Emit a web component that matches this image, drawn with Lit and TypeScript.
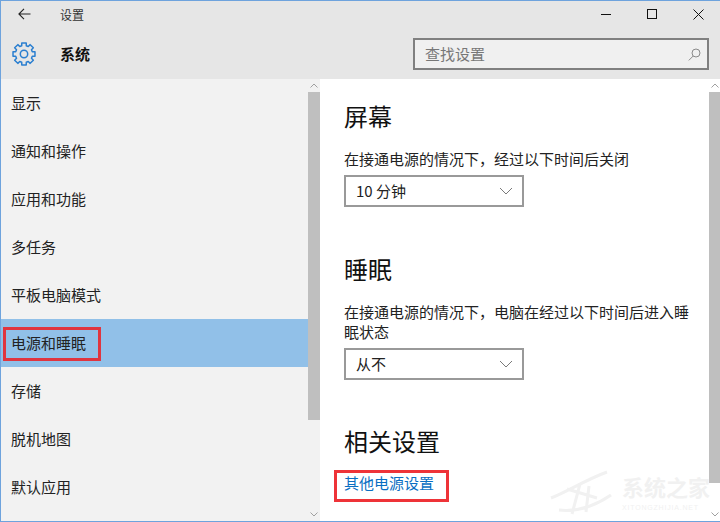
import { LitElement, html, css, svg } from "lit";
import { customElement } from "lit/decorators.js";

const gearPath = (() => {
  const cx = 12, cy = 12, teeth = 8, ro = 11.2, ri = 8.6;
  let d = "";
  for (let i = 0; i < teeth; i++) {
    const a = (i * 2 * Math.PI) / teeth - Math.PI / 2;
    const w = 0.2, g = 0.27;
    const pts = [
      [ri, a - g], [ro, a - w], [ro, a + w], [ri, a + g],
    ];
    pts.forEach(([r, t], j) => {
      const x = (cx + r * Math.cos(t)).toFixed(2);
      const y = (cy + r * Math.sin(t)).toFixed(2);
      d += (i === 0 && j === 0 ? "M" : "L") + x + " " + y + " ";
    });
  }
  return d + "Z";
})();

const chevron = html`<svg class="chev" width="14" height="8" viewBox="0 0 14 8"><path d="M1 1l6 6 6-6" fill="none" stroke="#7a7a7a" stroke-width="1"/></svg>`;

@customElement("app-root")
export class AppRoot extends LitElement {
  static styles = css`
    :host {
      display: block;
      width: 720px;
      height: 522px;
      font-family: "Noto Sans CJK SC", "Liberation Sans", sans-serif;
      color: #1a1a1a;
      overflow: hidden;
    }
    .win {
      position: relative;
      box-sizing: border-box;
      width: 720px;
      height: 522px;
      border: 1px solid #6ea3dd;
      border-right: none;
      display: flex;
      flex-direction: column;
      background: #fff;
    }
    .head {
      height: 78px;
      background: #e6e6e6;
      display: flex;
      flex-direction: column;
      flex: none;
    }
    .titlebar {
      height: 28px;
      display: flex;
      align-items: center;
      font-size: 12px;
      color: #333;
    }
    .titlebar .title { padding-bottom: 2px; }
    .back { width: 59px; display: flex; padding-bottom: 2px; }
    .back svg { margin-left: 17px; }
    .title { flex: 1; }
    .ctl { display: flex; align-items: center; margin-right: -1px; padding-bottom: 2px; }
    .ctl span { width: 46px; display: flex; justify-content: center; }
    .brand {
      display: flex;
      align-items: center;
      font-size: 15px;
      font-weight: 700;
      color: #111;
    }
    .brand svg { margin: 0 24px 0 11px; }
    .brand span { padding-bottom: 2px; }
    .subbar {
      flex: 1;
      display: flex;
      align-items: center;
      justify-content: space-between;
      padding-right: 11px;
    }
    .search {
      box-sizing: border-box;
      width: 296px;
      height: 32px;
      border: 2px solid #808080;
      background: #f0f0f0;
      display: flex;
      align-items: center;
      justify-content: space-between;
      padding: 0 6px 0 10px;
      font-size: 15px;
      color: #777;
    }
    .search span { padding-bottom: 2px; }
    .body { flex: 1; display: flex; min-height: 0; }
    .side {
      width: 307px;
      flex: none;
      background: #f2f2f2;
      display: flex;
      flex-direction: column;
      font-size: 15px;
      color: #222;
    }
    .item {
      position: relative;
      box-sizing: border-box;
      height: 48px;
      flex: none;
      display: flex;
      align-items: center;
      padding: 0 0 2px 10px;
    }
    .item.sel { background: #91c0e8; }
    .mark {
      position: absolute;
      box-sizing: border-box;
      border: 3px solid #e0353f;
      pointer-events: none;
    }
    .mark.m1 { left: 2px; top: 8px; width: 98px; height: 34px; }
    .mark.m2 { left: -10px; top: -2px; width: 115px; height: 32px; border-color: #ee3338; }
    .bar {
      width: 12px;
      flex: none;
      display: flex;
      flex-direction: column;
      background: #f2f2f2;
    }
    .bar.light { background: #fff; width: 11px; }
    .arrow { height: 13px; flex: none; display: flex; align-items: center; justify-content: center; }
    .thumb { background: #bfbfbf; flex: none; }
    .bar.left .thumb { height: 328px; }
    .bar.light .thumb { height: 391px; }
    .rest { flex: 1; }
    .main {
      flex: 1;
      position: relative;
      padding: 0 0 0 24px;
      min-width: 0;
    }
    h2 {
      margin: 0;
      font-size: 24px;
      font-weight: 400;
      line-height: 36px;
      color: #111;
    }
    .sec1 { padding-top: 19px; }
    .sec2 { padding-top: 44px; }
    .sec3 { padding-top: 43px; }
    p {
      margin: 0;
      font-size: 15px;
      line-height: 20px;
      width: 352px;
      color: #222;
    }
    .sec1 p { margin-top: 15px; }
    .sec2 p { margin-top: 15px; }
    .sel-box {
      box-sizing: border-box;
      width: 180px;
      height: 32px;
      border: 2px solid #999;
      margin-top: 6px;
      display: flex;
      align-items: center;
      justify-content: space-between;
      padding: 0 9px 0 10px;
      font-size: 15px;
      color: #222;
    }
    .sel-box span { padding-bottom: 1px; }
    .link-wrap { position: relative; margin-top: 13px; height: 24px; }
    .link { font-size: 15px; line-height: 22px; color: #0a6fc2; display: block; text-decoration: none; }
    .wm {
      position: absolute;
      right: -1px;
      bottom: 5px;
      display: flex;
      align-items: center;
      gap: 3px;
      color: #f1f1f1;
      pointer-events: none;
    }
    .wm b { font-size: 22px; font-weight: 700; line-height: 24px; display: block; }
    .wm i { font-size: 7px; line-height: 9px; margin-top: 5px; font-style: normal; display: block; letter-spacing: 0.8px; font-family: "Liberation Sans", sans-serif; }
  `;

  render() {
    const items = ["显示", "通知和操作", "应用和功能", "多任务", "平板电脑模式", "电源和睡眠", "存储", "脱机地图", "默认应用"];
    return html`<div class="win">
      <div class="head">
        <div class="titlebar">
          <div class="back"><svg width="13" height="12" viewBox="0 0 13 12"><path d="M12.5 6H1M6 .8L.9 6 6 11.2" fill="none" stroke="#222" stroke-width="1.1"/></svg></div>
          <div class="title">设置</div>
          <div class="ctl">
            <span><svg width="10" height="10" viewBox="0 0 10 10"><path d="M0 5.500h10" stroke="#111" stroke-width="1"/></svg></span>
            <span><svg width="10" height="10" viewBox="0 0 10 10"><rect x=".5" y=".5" width="9" height="9" fill="none" stroke="#111"/></svg></span>
            <span><svg width="11" height="11" viewBox="0 0 11 11"><path d="M.5.5l10 10M10.500.5l-10 10" stroke="#111" stroke-width="1"/></svg></span>
          </div>
        </div>
        <div class="subbar">
          <div class="brand">
            <svg width="24" height="24" viewBox="0 0 24 24">
              ${svg`<path d="${gearPath}" fill="none" stroke="#2b7fd0" stroke-width="1.5" stroke-linejoin="round"/><circle cx="12" cy="12" r="3.7" fill="none" stroke="#2b7fd0" stroke-width="1.5"/>`}
            </svg>
            <span>系统</span>
          </div>
          <div class="search">
            <span>查找设置</span>
            <svg width="13" height="13" viewBox="0 0 13 13"><circle cx="8" cy="5" r="4" fill="none" stroke="#8a8a8a"/><path d="M5.200 8L.8 12.400" stroke="#8a8a8a"/></svg>
          </div>
        </div>
      </div>
      <div class="body">
        <div class="side">
          ${items.map(
            (t, i) => html`<div class="item ${i === 5 ? "sel" : ""}">${t}${i === 5 ? html`<div class="mark m1"></div>` : ""}</div>`
          )}
        </div>
        <div class="bar left">
          <div class="arrow"><svg width="8" height="5" viewBox="0 0 8 5"><path d="M.5 4.500L4 1l3.500 3.500" fill="none" stroke="#a0a0a0"/></svg></div>
          <div class="thumb"></div>
          <div class="rest"></div>
          <div class="arrow"><svg width="8" height="5" viewBox="0 0 8 5"><path d="M.5.5L4 4 7.500.5" fill="none" stroke="#a0a0a0"/></svg></div>
        </div>
        <div class="main">
          <div class="sec1">
            <h2>屏幕</h2>
            <p>在接通电源的情况下，经过以下时间后关闭</p>
            <div class="sel-box"><span>10 分钟</span>${chevron}</div>
          </div>
          <div class="sec2">
            <h2>睡眠</h2>
            <p>在接通电源的情况下，电脑在经过以下时间后进入睡眠状态</p>
            <div class="sel-box"><span>从不</span>${chevron}</div>
          </div>
          <div class="sec3">
            <h2>相关设置</h2>
            <div class="link-wrap">
              <a class="link">其他电源设置</a>
              <div class="mark m2"></div>
            </div>
          </div>
          <div class="wm">
            <svg width="70" height="46" viewBox="0 0 70 46"><path d="M2 28C18 22 36 10 58 2M18 19l30 9M31 14l-8 30M40 16l-3 26M10 40C28 42 46 36 62 25" fill="none" stroke="#f1f1f1" stroke-width="3"/></svg>
            <div><b>系统之家</b><i>XITONGZHIJIA.NET</i></div>
          </div>
        </div>
        <div class="bar light">
          <div class="arrow"><svg width="8" height="5" viewBox="0 0 8 5"><path d="M.5 4.500L4 1l3.500 3.500" fill="none" stroke="#a0a0a0"/></svg></div>
          <div class="thumb"></div>
          <div class="rest"></div>
          <div class="arrow"><svg width="8" height="5" viewBox="0 0 8 5"><path d="M.5.5L4 4 7.500.5" fill="none" stroke="#a0a0a0"/></svg></div>
        </div>
      </div>
    </div>`;
  }
}
